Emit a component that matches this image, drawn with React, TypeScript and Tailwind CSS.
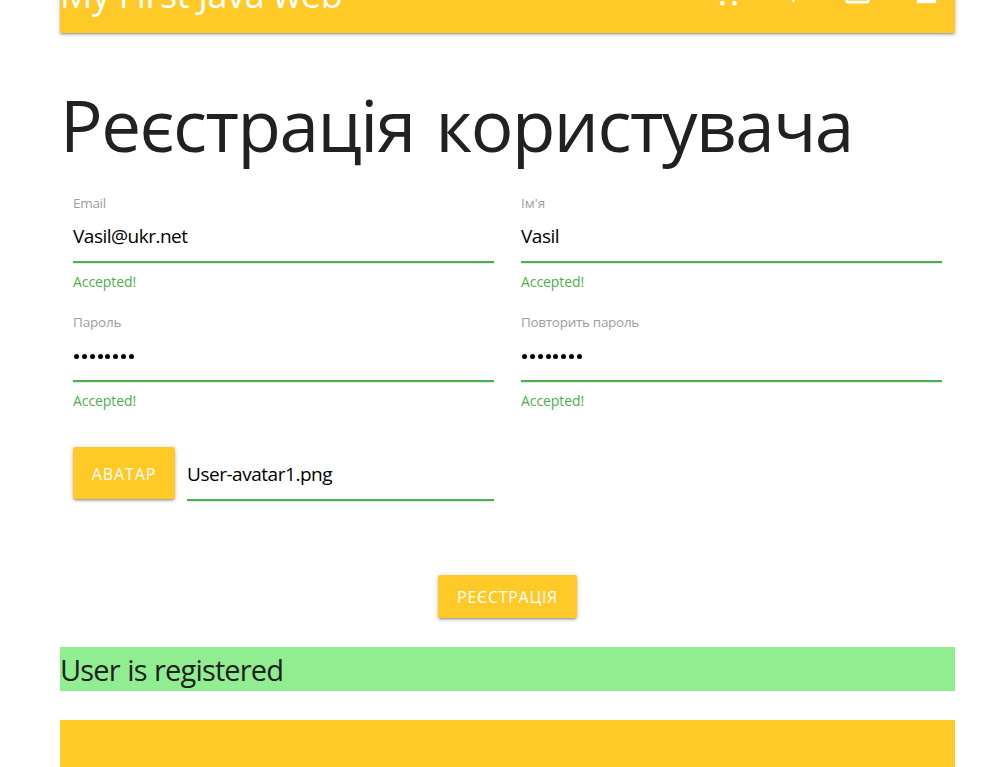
type FieldProps = { label: string; value: string; password?: boolean; labelClass: string };

function Field({ label, value, password, labelClass }: FieldProps) {
  return (
    <div className="h-[119px] w-[421px]">
      <div className="h-[20px] text-[13.5px] leading-[20px] text-[#9e9e9e]">
        <span className={labelClass}>{label}</span>
      </div>
      <div className="h-[50px] border-b-2 border-[#4caf50] pt-[8px] text-[19px] leading-[30px] tracking-[-0.5px] text-black shadow-[0_1px_0_0_#4caf5033]">
        {password ? (
          <div className="flex h-[32px] items-center gap-[2.85px] pl-px">
            {Array.from(value).map((_, i) => (
              <span key={i} className="size-[5px] rounded-full bg-black" />
            ))}
          </div>
        ) : (
          value
        )}
      </div>
      <div className="mt-[9px] text-[14px] leading-[20px] tracking-[-0.07px] text-[#4caf50]">Accepted!</div>
    </div>
  );
}

export default function App() {
  return (
    <div className="h-[767px] overflow-hidden bg-white font-['Open_Sans','Noto_Sans',sans-serif]">
      <div className="ml-[60px] flex w-[895px] flex-col">
        <header className="-mt-[44px] flex h-[77px] shrink-0 items-center justify-between bg-[#ffca28] text-white shadow-[0_2px_2px_0_rgba(0,0,0,0.14),0_3px_1px_-2px_rgba(0,0,0,0.12),0_1px_5px_0_rgba(0,0,0,0.2)]">
          <span className="text-[36px] leading-[77px] tracking-[-0.37px]">My First Java web</span>
          <nav className="flex pr-[14px] pb-[2px]">
            <svg className="mr-[36px] size-[29px]" viewBox="0 0 24 24" fill="currentColor"><path d="M7 18c-1.1 0-1.99.9-1.99 2S5.9 22 7 22s2-.9 2-2-.9-2-2-2zM1 2v2h2l3.6 7.59-1.35 2.45C4.52 15.37 5.48 17 7 17h12v-2H7l1.1-2h7.45c.75 0 1.41-.41 1.75-1.03L20.88 5H5.21l-.94-2H1zm16 16c-1.1 0-1.99.9-1.99 2s.89 2 1.99 2 2-.9 2-2-.9-2-2-2z" /></svg>
            <svg className="mr-[35px] size-[29px]" viewBox="0 0 24 24" fill="currentColor"><path d="M11 5h2v6h6v2h-6v6h-2v-6H5v-2h6z" /></svg>
            <svg className="mr-[40px] size-[29px]" viewBox="0 0 24 24" fill="currentColor"><path d="M20 4H4c-1.1 0-2 .9-2 2v12.2c0 1.1.9 2 2 2h16c1.1 0 2-.9 2-2V6c0-1.1-.9-2-2-2zm0 14H4V8h16z" /></svg>
            <svg className="size-[29px]" viewBox="0 0 24 24" fill="currentColor"><path d="M12 12c2.21 0 4-1.79 4-4s-1.79-4-4-4-4 1.79-4 4 1.79 4 4 4zm0 2c-2.67 0-8 1.34-8 4v2h16v-2c0-2.66-5.33-4-8-4z" /></svg>
          </nav>
        </header>
        <h1 className="mt-[47px] h-[92px] whitespace-nowrap text-[71px] leading-[90px] tracking-[-1.5px] [word-spacing:4px] text-[#212121]">Реєстрація користувача</h1>
        <form className="mt-[21px] px-[13px]">
          <div className="grid grid-cols-2 gap-x-[27px]">
            <Field label="Email" value="Vasil@ukr.net" labelClass="tracking-[-0.3px]" />
            <Field label="Ім'я" value="Vasil" labelClass="" />
            <Field label="Пароль" value="password" password labelClass="tracking-[-0.2px]" />
            <Field label="Повторить пароль" value="password" password labelClass="tracking-[-0.3px]" />
          </div>
          <div className="mt-[16px] flex h-[54px] w-[421px]">
            <button type="button" className="h-[52px] w-[102px] rounded-[2px] bg-[#ffca28] pt-[2px] text-[16px] tracking-[0.9px] text-white shadow-[0_2px_2px_0_rgba(0,0,0,0.14),0_3px_1px_-2px_rgba(0,0,0,0.12),0_1px_5px_0_rgba(0,0,0,0.2)]">АВАТАР</button>
            <div className="ml-[12px] h-[54px] flex-1 border-b-2 border-[#4caf50] pt-[12px] text-[19px] leading-[30px] tracking-[-0.47px] text-black shadow-[0_1px_0_0_#4caf5033]">User-avatar1.png</div>
          </div>
          <div className="mt-[74px] flex justify-center">
            <button type="button" className="h-[43px] w-[139px] rounded-[2px] bg-[#ffca28] text-[16px] tracking-[0.7px] text-white shadow-[0_2px_2px_0_rgba(0,0,0,0.14),0_3px_1px_-2px_rgba(0,0,0,0.12),0_1px_5px_0_rgba(0,0,0,0.2)]">РЕЄСТРАЦІЯ</button>
          </div>
        </form>
        <p className="mt-[29px] h-[44px] bg-[#90ee90] text-[29px] leading-[46px] tracking-[-0.85px] [word-spacing:0.8px] text-[#212121]">User is registered</p>
        <footer className="mt-[29px] h-[47px] bg-[#ffca28]" />
      </div>
    </div>
  );
}
